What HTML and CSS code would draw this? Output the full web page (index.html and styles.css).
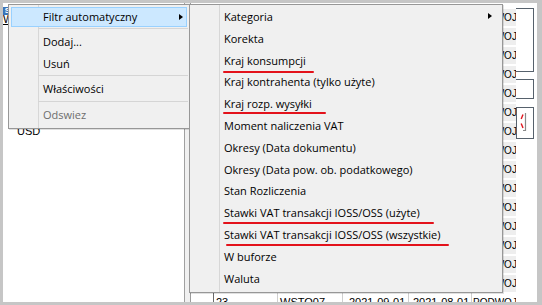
FILE: index.html
```html
<!DOCTYPE html>
<html lang="pl">
<head>
<meta charset="utf-8">
<title>Filtr automatyczny</title>
<link rel="stylesheet" href="styles.css">
</head>
<body>
<div class="window">
  <div class="content">
    <div class="left-panel">
      <div class="lp-head"><span class="app-icon">S</span></div>
      <div class="lp-title">Waluty</div>
      <div class="lp-list">
        <div class="lp-row">USD</div>
      </div>
    </div>
    <div class="splitter"></div>
    <div class="right-panel">
      <div class="grid">
        <div class="row"><div class="c ind"></div><div class="c c1"></div><div class="c c2"></div><div class="c c3"></div><div class="c c4"></div><div class="c c5"><span>PODWOJ</span></div></div>
        <div class="row"><div class="c ind"></div><div class="c c1"></div><div class="c c2"></div><div class="c c3"></div><div class="c c4"></div><div class="c c5"><span>PODWOJ</span></div></div>
        <div class="row"><div class="c ind"></div><div class="c c1"></div><div class="c c2"></div><div class="c c3"></div><div class="c c4"></div><div class="c c5"><span>PODWOJ</span></div></div>
        <div class="row"><div class="c ind"></div><div class="c c1"></div><div class="c c2"></div><div class="c c3"></div><div class="c c4"></div><div class="c c5"><span>PODWOJ</span></div></div>
        <div class="row"><div class="c ind"></div><div class="c c1"></div><div class="c c2"></div><div class="c c3"></div><div class="c c4"></div><div class="c c5"><span>PODWOJ</span></div></div>
        <div class="row"><div class="c ind"></div><div class="c c1"></div><div class="c c2"></div><div class="c c3"></div><div class="c c4"></div><div class="c c5"><span>PODWOJ</span></div></div>
        <div class="row"><div class="c ind"></div><div class="c c1"></div><div class="c c2"></div><div class="c c3"></div><div class="c c4"></div><div class="c c5"><span>PODWOJ</span></div></div>
        <div class="row"><div class="c ind"></div><div class="c c1"></div><div class="c c2"></div><div class="c c3"></div><div class="c c4"></div><div class="c c5"><span>PODWOJ</span></div></div>
        <div class="row"><div class="c ind"></div><div class="c c1"></div><div class="c c2"></div><div class="c c3"></div><div class="c c4"></div><div class="c c5"><span>PODWOJ</span></div></div>
        <div class="row"><div class="c ind"></div><div class="c c1"></div><div class="c c2"></div><div class="c c3"></div><div class="c c4"></div><div class="c c5"><span>PODWOJ</span></div></div>
        <div class="row"><div class="c ind"></div><div class="c c1"></div><div class="c c2"></div><div class="c c3"></div><div class="c c4"></div><div class="c c5"><span>PODWOJ</span></div></div>
        <div class="row"><div class="c ind"></div><div class="c c1"></div><div class="c c2"></div><div class="c c3"></div><div class="c c4"></div><div class="c c5"><span>PODWOJ</span></div></div>
        <div class="row"><div class="c ind"></div><div class="c c1"></div><div class="c c2"></div><div class="c c3"></div><div class="c c4"></div><div class="c c5"><span>PODWOJ</span></div></div>
        <div class="row"><div class="c ind"></div><div class="c c1"></div><div class="c c2"></div><div class="c c3"></div><div class="c c4"></div><div class="c c5"><span>PODWOJ</span></div></div>
        <div class="row"><div class="c ind"></div><div class="c c1"></div><div class="c c2"></div><div class="c c3"></div><div class="c c4"></div><div class="c c5"><span>PODWOJ</span></div></div>
        <div class="row current"><div class="c ind"></div><div class="c c1">23</div><div class="c c2">WSTO07</div><div class="c c3">2021-09-01</div><div class="c c4">2021-08-01</div><div class="c c5"><span>PODWOJ</span></div></div>
      </div>
      <div class="side">
        <div class="box box1"></div>
        <div class="box box2"></div>
        <div class="box box3">
          <svg class="box-icon" width="16" height="30" viewBox="0 0 16 30">
            <path d="M6 5.5 L4.2 10" stroke="#e0161e" stroke-width="1.4" fill="none"/>
            <path d="M4.2 14.5 L6 19" stroke="#e0161e" stroke-width="1.4" fill="none"/>
            <path d="M8.5 4 V21.5 H6" stroke="#8a8a8a" stroke-width="1.2" fill="none"/>
          </svg>
        </div>
      </div>
    </div>
  </div>

  <div class="menu">
    <div class="item active">Filtr automatyczny<span class="arrow"></span></div>
    <div class="sep"></div>
    <div class="item">Dodaj...</div>
    <div class="item">Usuń</div>
    <div class="sep"></div>
    <div class="item">Właściwości</div>
    <div class="sep"></div>
    <div class="item disabled">Odswiez</div>
  </div>

  <div class="submenu">
    <div class="item">Kategoria<span class="arrow sub-arrow"></span></div>
    <div class="item">Korekta</div>
    <div class="item"><span class="mark mark-a">Kraj konsumpcji</span></div>
    <div class="item">Kraj kontrahenta (tylko użyte)</div>
    <div class="item"><span class="mark mark-b">Kraj rozp. wysyłki</span></div>
    <div class="item">Moment naliczenia VAT</div>
    <div class="item">Okresy (Data dokumentu)</div>
    <div class="item">Okresy (Data pow. ob. podatkowego)</div>
    <div class="item">Stan Rozliczenia</div>
    <div class="item"><span class="mark mark-c">Stawki VAT transakcji IOSS/OSS (użyte)</span></div>
    <div class="item"><span class="mark mark-d">Stawki VAT transakcji IOSS/OSS (wszystkie)</span></div>
    <div class="item">W buforze</div>
    <div class="item">Waluta</div>
  </div>
</div>
</body>
</html>
```
FILE: styles.css
```css
* { box-sizing: border-box; }
html, body { margin: 0; padding: 0; }
body {
  width: 542px;
  height: 305px;
  overflow: hidden;
  background: #c6c6c6;
  font-family: "Liberation Sans", Arial, sans-serif;
  font-size: 11px;
  color: #000;
}
.window {
  position: relative;
  width: 542px;
  height: 305px;
  padding: 3px 5px 3px 3px;
  background: #c6c6c6;
}
.content {
  display: flex;
  height: 299px;
  background: #fff;
  overflow: hidden;
}

/* left panel */
.left-panel {
  width: 182px;
  flex: none;
  border-right: 1px solid #a0a0a0;
  background: #fff;
}
.lp-head { height: 10px; }
.app-icon {
  display: inline-block;
  width: 9px;
  height: 8px;
  background: #3a74b8;
  color: #fff;
  font-size: 8px;
  line-height: 8px;
  font-weight: bold;
  text-align: center;
}
.lp-title {
  height: 13px;
  line-height: 13px;
  text-decoration: underline;
}
.lp-list { padding-top: 99px; }
.lp-row {
  height: 13px;
  line-height: 13px;
  padding-left: 14px;
}

.splitter {
  width: 5px;
  flex: none;
  background: #f0f0f0;
}

/* right panel */
.right-panel {
  flex: 1;
  display: flex;
  border-left: 1px solid #9c9c9c;
}
.grid {
  width: 325px;
  flex: none;
  padding-top: 5px;
}
.row {
  display: flex;
  height: 19px;
  line-height: 19px;
  white-space: nowrap;
}
.c {
  overflow: hidden;
  border-left: 1px solid #cfcfcf;
  padding-left: 2px;
}
.ind { width: 22px; border-left: none; }
.c1 { width: 64px; border-left-color: #6a6a6a; }
.c2 { width: 65px; padding-left: 2px; }
.c3 { width: 66px; padding-left: 6px; }
.c4 { width: 63px; padding-left: 4px; }
.c5 { width: 45px; padding-left: 1px; font-size: 10px; }
.c5 span {
  display: block;
  height: 17px;
  margin-top: 1px;
  line-height: 17px;
  background: #eeeeee;
}
.current .c5 span { background: #fff; }

.side {
  flex: 1;
  padding: 5px 3px 0 0;
}
.box {
  border: 1px solid #56616c;
  border-left: none;
}
.box1 { height: 64px; }
.box2 { height: 20px; margin-top: 7px; }
.box3 {
  height: 32px;
  margin-top: 8px;
  border-left: 1px solid #56616c;
}
.box-icon { display: block; margin-top: 1px; }

/* popup menus */
.menu, .submenu {
  position: absolute;
  background: #f0f0f0;
  border: 1px solid #979797;
  font-family: "Open Sans", "Noto Sans", sans-serif;
  font-size: 11px;
  color: #000;
  box-shadow: 1px 1px 0 rgba(0, 0, 0, 0.12);
}
.menu::before, .submenu::before {
  content: "";
  position: absolute;
  left: 29px;
  top: 0;
  bottom: 0;
  width: 1px;
  background: #d7d7d7;
}
.menu {
  left: 8px;
  top: 4px;
  width: 182px;
  padding: 1px 0 2px;
}
.submenu {
  left: 189px;
  top: 4px;
  width: 314px;
  padding: 1px 0 3px;
}
.item {
  position: relative;
  height: 21.8px;
  line-height: 21.8px;
  padding-left: 34px;
  white-space: nowrap;
}
.item.active {
  height: 19.8px;
  line-height: 18px;
  margin: 1px 2px;
  padding-left: 31px;
  background: #cce8ff;
  border: 1px solid #99d1ff;
}
.item.disabled { color: #6d6d6d; }
.arrow {
  position: absolute;
  right: 3px;
  top: 6px;
  width: 0;
  height: 0;
  border-left: 4px solid #000;
  border-top: 3.5px solid transparent;
  border-bottom: 3.5px solid transparent;
}
.sub-arrow { right: 10px; top: 7px; }
.sep {
  height: 1px;
  margin: 1px 1px 2px 29px;
  background: #d5d5d5;
  position: relative;
}

/* red hand-drawn underlines */
.mark { position: relative; }
.mark::after {
  content: "";
  position: absolute;
  left: -1px;
  height: 2px;
  background: #e3121b;
  border-radius: 1px;
}
.mark-a::after { width: 91px; top: 18px; }
.mark-b::after { width: 103px; top: 16px; }
.mark-c::after { width: 211px; top: 17px; }
.mark-d::after { left: 2px; width: 223px; top: 17.5px; }
```
